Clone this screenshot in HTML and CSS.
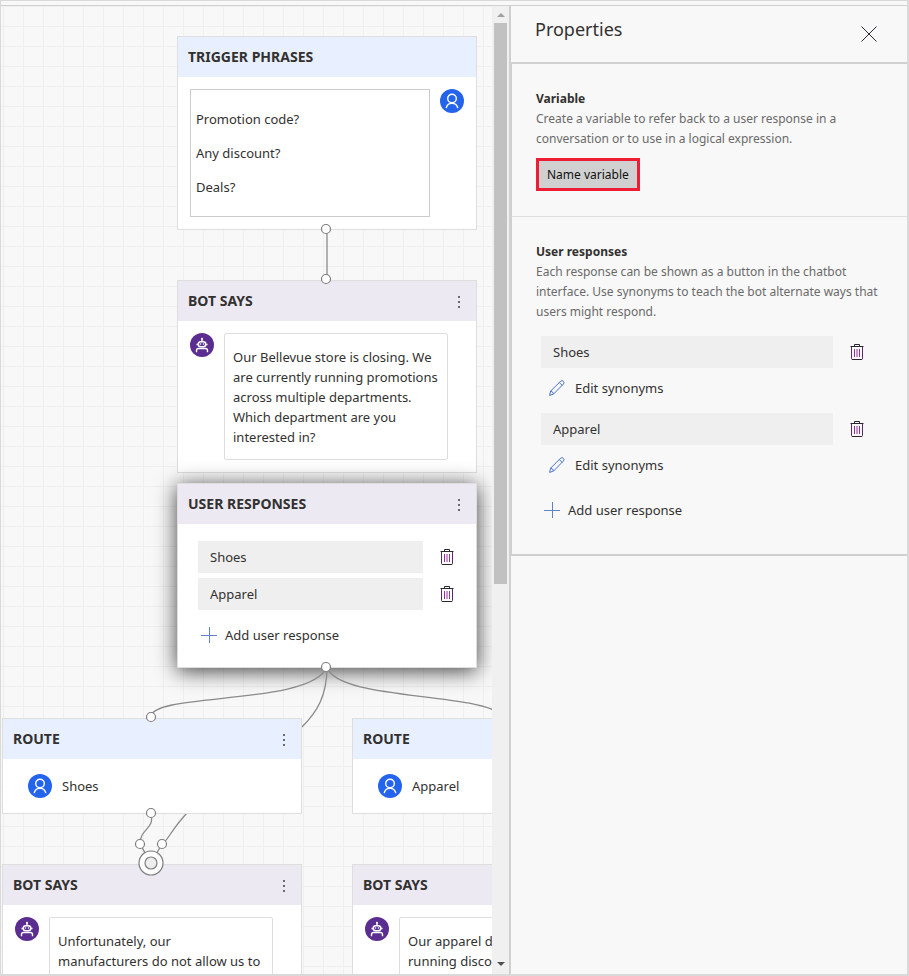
FILE: index.html
```html
<!DOCTYPE html>
<html lang="en">
<head>
<meta charset="utf-8">
<title>Authoring canvas</title>
<link rel="stylesheet" href="styles.css">
</head>
<body>
<svg class="defs" aria-hidden="true">
  <symbol id="user" viewBox="0 0 24 24"><circle cx="12" cy="12" r="12" fill="#2463eb"/><g fill="none" stroke="#fff" stroke-width="1.4"><circle cx="12" cy="9.5" r="4.300"/><path d="M6.200 19.200a5.900 5.900 0 0 1 11.600 0"/></g></symbol>
  <symbol id="bot" viewBox="0 0 24 24"><circle cx="12" cy="12" r="12" fill="#5c2d91"/><g fill="none" stroke="#fff" stroke-width="1.4"><path d="M12 5.500v3M6.500 19.200v-1.700q0-2 2-2h7q2 0 2 2v1.700"/><rect x="8.200" y="8.700" width="7.600" height="5" rx="2.500"/><path d="M6.500 11.500H8M16 11.500h1.500"/></g><g fill="#fff"><circle cx="12" cy="5.800" r="1"/><circle cx="10.500" cy="11" r=".8"/><circle cx="13.500" cy="11" r=".8"/></g></symbol>
  <symbol id="trash" viewBox="0 0 16 18"><g fill="none" stroke="#2b2632"><path d="M1.500 3.500h13M5.500 3V1.500h5V3"/><path d="M3 16.500h10"/><path stroke="#5a2a66" d="M2.500 4v11.500q0 1 1 1M13.500 4v11.500q0 1-1 1"/><path stroke="#96309f" d="M5.500 6v8M8 6v8M10.500 6v8"/></g></symbol>
  <symbol id="plus" viewBox="0 0 16 16"><path d="M8.500 0v16M0 8.500h16" fill="none" stroke="#5f83c5"/></symbol>
  <symbol id="pencil" viewBox="0 0 16 16"><path d="M.6 15.400l1-4.200L11.700 1.100q1.400-1 2.600.2t.2 2.600L4.600 14zM1.600 11.200q2.500.3 3 2.800M10.300 2.500l3 3" fill="none" stroke="#4a73c9"/></symbol>
</svg>
<div class="app">
  <main class="canvas">
    <div class="surface">
      <article class="node trigger">
        <header class="head route-head"><h2>TRIGGER PHRASES</h2></header>
        <div class="row">
          <div class="phrases"><p>Promotion code?</p><p>Any discount?</p><p>Deals?</p></div>
          <svg class="avatar"><use href="#user"/></svg>
        </div>
      </article>
      <article class="node bot">
        <header class="head"><h2>BOT SAYS</h2><button class="more" aria-label="More"><i></i><i></i><i></i></button></header>
        <div class="row">
          <svg class="avatar"><use href="#bot"/></svg>
          <p class="message">Our Bellevue store is closing. We<br>are currently running promotions<br>across multiple departments.<br>Which department are you<br>interested in?</p>
        </div>
      </article>
      <article class="node responses">
        <header class="head"><h2>USER RESPONSES</h2><button class="more" aria-label="More"><i></i><i></i><i></i></button></header>
        <div class="answers">
          <div class="answer"><input aria-label="Response 1" value="Shoes"><button class="icon-btn" aria-label="Delete Shoes"><svg class="trash"><use href="#trash"/></svg></button></div>
          <div class="answer"><input aria-label="Response 2" value="Apparel"><button class="icon-btn" aria-label="Delete Apparel"><svg class="trash"><use href="#trash"/></svg></button></div>
          <button class="action"><svg class="glyph"><use href="#plus"/></svg>Add user response</button>
        </div>
      </article>
      <svg class="wires" viewBox="0 0 491 969" aria-hidden="true">
        <g class="line">
          <path d="M326 223V273M326 661C310 700 150 686 150 711M326 661C326 690 316 706 301 721M326 661C336 694 470 686 500 708M150 807C154 824 139 822 139 838L150 857M186 807C170 824 166 836 161 838L150 857"/>
        </g>
      </svg>
      <article class="node route-a">
        <header class="head route-head"><h2>ROUTE</h2><button class="more" aria-label="More"><i></i><i></i><i></i></button></header>
        <div class="choice"><svg class="avatar"><use href="#user"/></svg><span>Shoes</span></div>
      </article>
      <article class="node route-b">
        <header class="head route-head"><h2>ROUTE</h2><button class="more" aria-label="More"><i></i><i></i><i></i></button></header>
        <div class="choice"><svg class="avatar"><use href="#user"/></svg><span>Apparel</span></div>
      </article>
      <article class="node bot-a">
        <header class="head"><h2>BOT SAYS</h2><button class="more" aria-label="More"><i></i><i></i><i></i></button></header>
        <div class="row"><svg class="avatar"><use href="#bot"/></svg><p class="message">Unfortunately, our<br>manufacturers do not allow us to</p></div>
      </article>
      <article class="node bot-b">
        <header class="head"><h2>BOT SAYS</h2><button class="more" aria-label="More"><i></i><i></i><i></i></button></header>
        <div class="row"><svg class="avatar"><use href="#bot"/></svg><p class="message">Our apparel department is<br>running discounts</p></div>
      </article>
      <svg class="wires" viewBox="0 0 491 969" aria-hidden="true">
        <g class="port">
          <circle cx="325" cy="223" r="4.500"/><circle cx="325" cy="273" r="4.500"/><circle cx="325" cy="661" r="4.500"/>
          <circle cx="150" cy="711" r="4.500"/><circle cx="150" cy="807" r="4.500"/><circle cx="139" cy="838" r="4.500"/><circle cx="161" cy="838" r="4.500"/>
          <circle cx="150" cy="857" r="12"/><circle cx="150" cy="857" r="6" class="core"/>
        </g>
      </svg>
    </div>
    <div class="scrollbar" aria-hidden="true"><span class="up"></span><span class="thumb"></span><span class="down"></span></div>
  </main>
  <aside class="panel">
    <header class="panel-head"><h1>Properties</h1><button class="close" aria-label="Close"><svg viewBox="0 0 16 16"><path d="M.5.5l15 15M15.500.5l-15 15" fill="none" stroke="#2b2632"/></svg></button></header>
    <section class="variable">
      <h3>Variable</h3>
      <p>Create a variable to refer back to a user response in a<br>conversation or to use in a logical expression.</p>
      <button class="name-btn">Name variable</button>
    </section>
    <section class="user-responses">
      <h3>User responses</h3>
      <p>Each response can be shown as a button in the chatbot<br>interface. Use synonyms to teach the bot alternate ways that<br>users might respond.</p>
      <div class="list">
        <div class="answer"><input aria-label="User response 1" value="Shoes"><button class="icon-btn" aria-label="Delete Shoes"><svg class="trash"><use href="#trash"/></svg></button></div>
        <button class="action edit"><svg class="glyph"><use href="#pencil"/></svg>Edit synonyms</button>
        <div class="answer"><input aria-label="User response 2" value="Apparel"><button class="icon-btn" aria-label="Delete Apparel"><svg class="trash"><use href="#trash"/></svg></button></div>
        <button class="action edit"><svg class="glyph"><use href="#pencil"/></svg>Edit synonyms</button>
        <button class="action add"><svg class="glyph"><use href="#plus"/></svg>Add user response</button>
      </div>
    </section>
  </aside>
</div>
</body>
</html>
```
FILE: styles.css
```css
* { box-sizing: border-box; }
body, h1, h2, h3, p { margin: 0; }
body {
  height: 100vh;
  padding-top: 4px;
  overflow: hidden;
  background: #f8f8f8;
  border: 1px solid #d9d9d9;
  border-width: 1px 2px 2px 1px;
  color: #323130;
  font: 13px/20px "Noto Sans", "Open Sans", sans-serif;
}
button, input { font: inherit; color: inherit; border: 0; padding: 0; background: none; }
svg { flex: none; }
.defs { position: absolute; width: 0; height: 0; }
.app { display: flex; height: 100%; border-top: 1px solid #d0d0d0; }
.canvas { display: flex; flex: 508 1 0; min-width: 0; }
.surface {
  position: relative;
  flex: 1;
  overflow: hidden;
  background:
    linear-gradient(90deg, #efefef 1px, transparent 1px) 2px 0 / 20px 20px,
    linear-gradient(#efefef 1px, transparent 1px) 0 0 / 20px 20px;
}
.wires { position: absolute; left: 0; top: 0; width: 491px; height: 969px; }
.line { fill: none; stroke: #8a8a8a; stroke-width: 1.3; }
.port { fill: #fff; stroke: #7d7d7d; stroke-width: 1.2; }
.core { fill: #eee; }

.node { position: absolute; width: 300px; background: #fff; border: 1px solid #dedede; }
.trigger { left: 176px; top: 30px; }
.bot { left: 176px; top: 274px; }
.responses { left: 176px; top: 477px; box-shadow: 0 3px 20px rgba(0, 0, 0, .75); }
.route-a { left: 1px; top: 712px; }
.route-b { left: 351px; top: 712px; }
.bot-a { left: 1px; top: 858px; }
.bot-b { left: 351px; top: 858px; }
.head { display: flex; align-items: center; justify-content: space-between; height: 40px; padding: 0 10px; background: #ede9f3; }
.route-head { background: #e8effe; }
h2 { font-size: 14px; line-height: 20px; font-weight: 700; }
.more { display: flex; flex-direction: column; align-items: center; gap: 3px; width: 14px; padding-top: 2px; }
.more i { width: 2px; height: 2px; background: #6a6a6a; }
.row { display: flex; gap: 10px; padding: 12px; }
.avatar { width: 24px; height: 24px; }
.phrases { display: flex; flex-direction: column; gap: 14px; width: 240px; padding: 19px 5px; border: 1px solid #ccc; }
.message { width: 224px; padding: 13px 8px 12px; border: 1px solid #dedede; border-radius: 2px; white-space: nowrap; }
.choice { display: flex; align-items: center; gap: 10px; padding: 15px 25px; }
.answers { display: flex; flex-direction: column; gap: 5px; padding: 17px 20px 16px; }
.answer { display: flex; align-items: center; gap: 16px; }
.answer input { flex: 1; min-width: 0; height: 32px; padding: 0 12px; background: #efefef; }
.icon-btn { display: flex; width: 16px; }
.answers .icon-btn { margin-right: 1px; }
.trash { width: 16px; height: 18px; }
.glyph { width: 16px; height: 16px; }
.action { display: flex; align-items: center; gap: 8px; height: 32px; padding: 0 3px; }
.answers .action { margin-top: 4px; }

.scrollbar { display: flex; flex-direction: column; align-items: center; width: 17px; background: #f0f0f0; }
.up, .down { margin: 7px 0 6px; border: 4px solid transparent; border-top-width: 0; border-bottom-color: #a0a0a0; }
.thumb { width: 13px; height: 561px; background: #c1c1c1; }
.down { margin: auto 0 8px; border-width: 4px 4px 0; border-color: #505050 transparent transparent; }

.panel { flex: 396 1 0; min-width: 0; border-left: 2px solid #d0d0d0; }
.panel-head { display: flex; justify-content: space-between; height: 58px; padding: 12px 30px 0 24px; border-bottom: 2px solid #d0d0d0; }
h1 { font-size: 18px; line-height: 22px; font-weight: 400; }
.close { width: 16px; height: 16px; margin-top: 8px; }
.close svg { display: block; width: 16px; height: 16px; }
.panel section { padding: 25px 24px 25px; border-left: 1px solid #d0d0d0; border-bottom: 1px solid #dedede; }
h3 { font-size: 12px; line-height: 20px; font-weight: 700; }
.panel section p { font-size: 12px; color: #6a6a6a; white-space: nowrap; }
.name-btn { display: block; margin-top: 9px; height: 33px; padding: 0 8px; background: #d0d0d0; border: 3px solid #ee1c35; color: #111; font-size: 12px; }
.panel .user-responses { border-bottom: 2px solid #d0d0d0; padding-bottom: 28px; }
.list { display: flex; flex-direction: column; padding: 14px 18px 0 5px; }
.edit { gap: 10px; margin: 4px 0 9px 5px; }
.add { margin-top: 4px; }
```
